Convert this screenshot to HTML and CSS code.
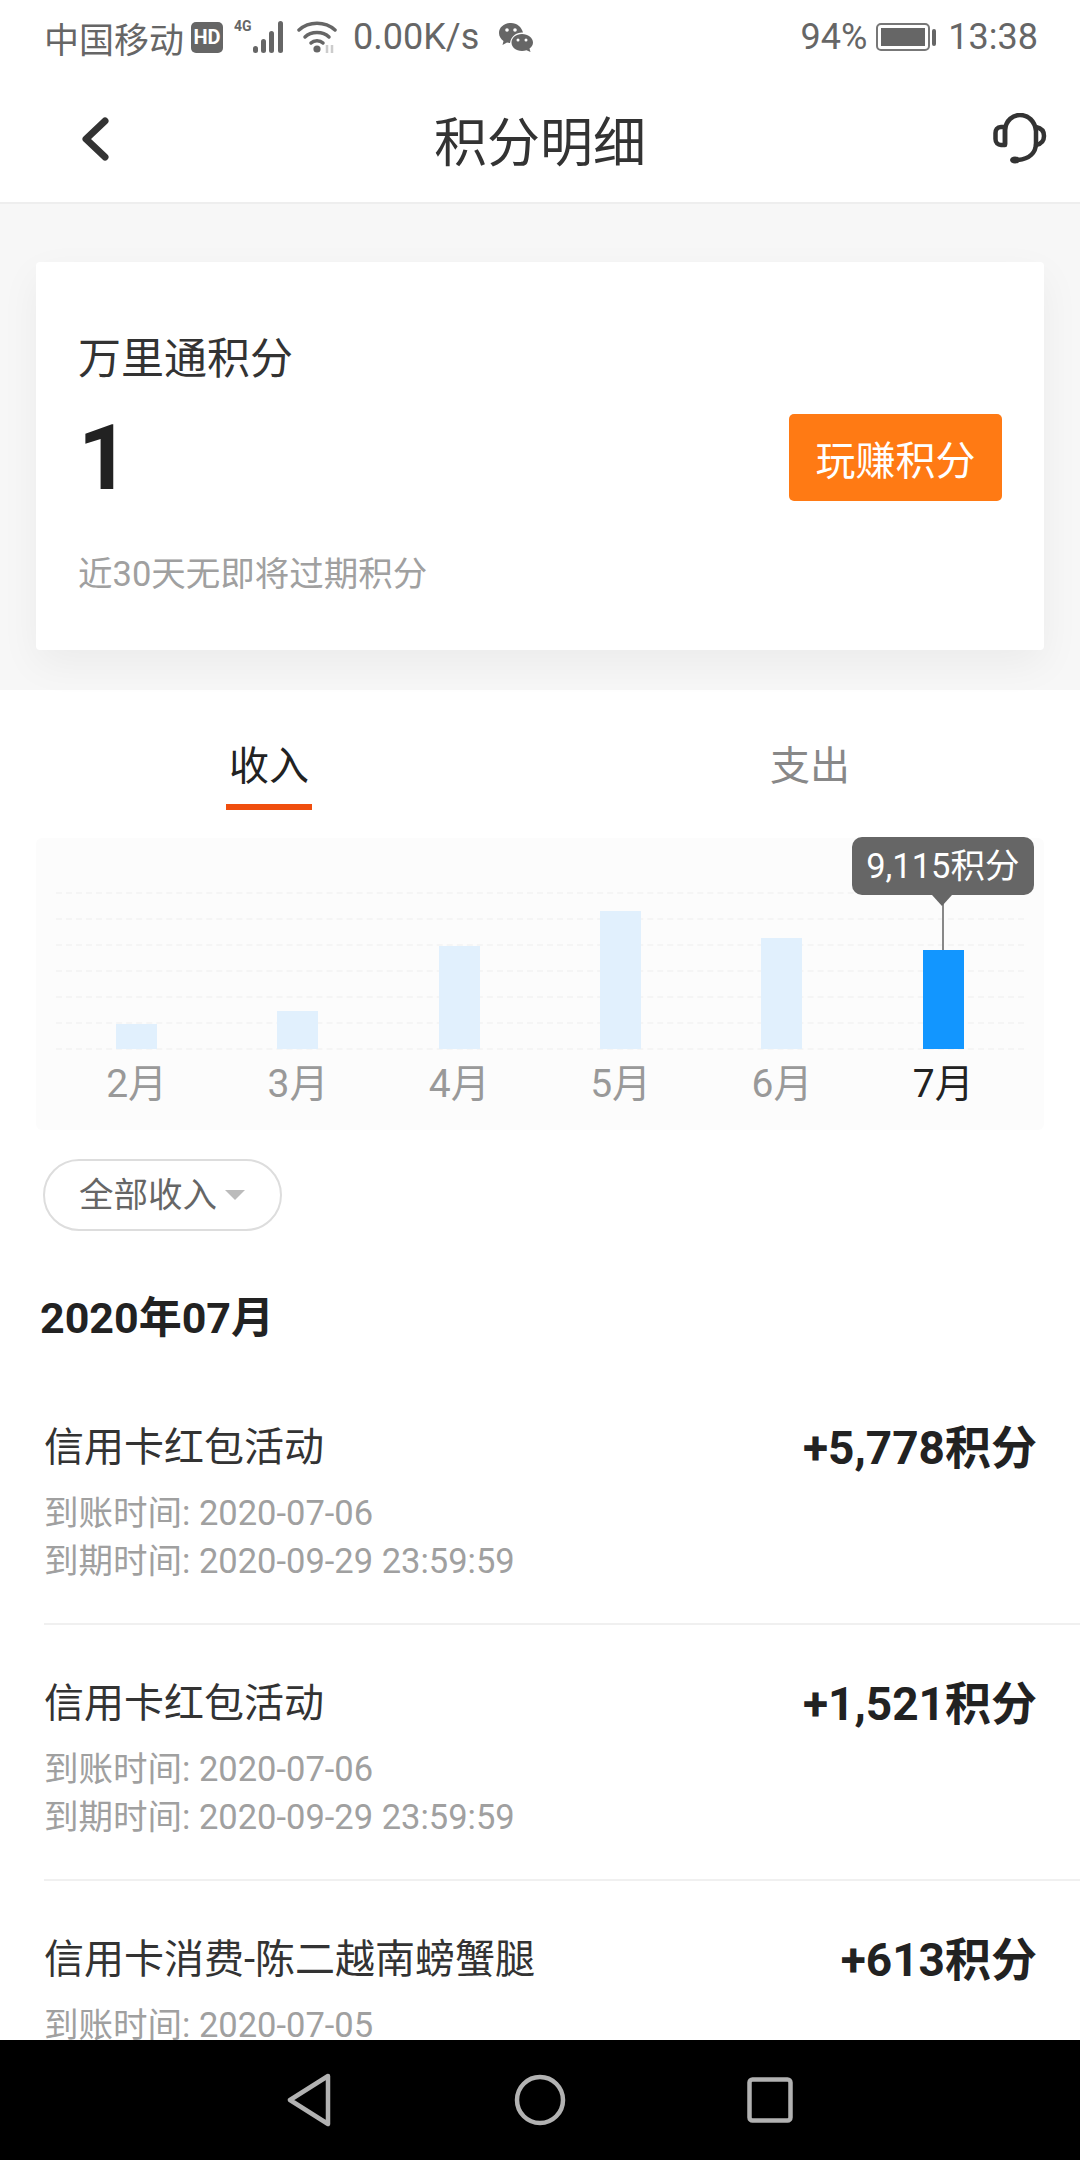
FILE: index.html
```html
<!DOCTYPE html>
<html lang="zh-CN">
<head>
    <meta charset="UTF-8">
    <meta content="width=device-width, initial-scale=1.0" name="viewport">
    <title>积分明细</title>
    <link rel="stylesheet" href="styles.css">
</head>
<body>
<div class="screen">
    <div class="status-bar">
        <span class="carrier">中国移动</span>
        <span class="hd-badge">HD</span>
        <svg class="signal" width="54" height="46" viewBox="0 -6 54 46">
            <text x="0" y="11" class="signal-label">4G</text>
            <g fill="#666">
                <rect x="19" y="26" width="5" height="7" rx="2.5"/>
                <rect x="27" y="19" width="5" height="14" rx="2.5"/>
                <rect x="35" y="11" width="5" height="22" rx="2.5"/>
                <rect x="44" y="1" width="5" height="32" rx="2.5"/>
            </g>
        </svg>
        <svg class="wifi" width="42" height="34" viewBox="0 0 42 34">
            <g fill="none" stroke="#666" stroke-width="3.5" stroke-linecap="round">
                <path d="M2 10 C12 1 28 1 38 10"/>
                <path d="M8 17 C14 11 26 11 32 17"/>
                <path d="M14 23 C17 20 23 20 26 23"/>
            </g>
            <circle cx="20" cy="29" r="3.6" fill="#666"/>
            <path d="M30 33 V25 M35 33 V25" stroke="#ccc" stroke-width="2.5"/>
        </svg>
        <span class="speed">0.00K/s</span>
        <svg class="wechat" width="36" height="30" viewBox="0 0 36 30">
            <path fill="#666" d="M13 1 C6 1 1 5.500 1 11 C1 14.500 3 17 5.500 19 L4.500 23 L9 20.500 C10 20.800 11 21 12 21 C13 14 19 10 25 10.500 C23.500 5 19 1 13 1Z"/>
            <path fill="#666" d="M24 12 C17.800 12 13.500 16 13.500 20.500 C13.500 25 17.800 29 24 29 C25.500 29 27 28.700 28.500 28.200 L32.500 30 L31.500 26.500 C33.800 25 35 22.800 35 20.500 C35 16 30 12 24 12Z"/>
            <circle cx="9" cy="8" r="1.800" fill="#fff"/>
            <circle cx="17" cy="8" r="1.800" fill="#fff"/>
            <circle cx="20" cy="18" r="1.500" fill="#fff"/>
            <circle cx="28" cy="18" r="1.500" fill="#fff"/>
        </svg>
        <span class="status-right">94%</span>
        <span class="battery"><span class="battery-level"></span></span>
        <span class="battery-nub"></span>
        <span class="clock">13:38</span>
    </div>

    <header class="top-nav">
        <svg class="back-icon" width="30" height="44" viewBox="0 0 30 44">
            <path d="M25 4 L6 22 L25 40" fill="none" stroke="#333" stroke-width="7" stroke-linecap="round" stroke-linejoin="round"/>
        </svg>
        <h1>积分明细</h1>
        <svg class="service-icon" width="54" height="52" viewBox="0 0 54 52">
            <g fill="none" stroke="#333" stroke-width="4.500" stroke-linecap="round" stroke-linejoin="round">
                <path d="M12 31 V17 C13 7 20 2 27 2 C35 2 42 8 43 18 V30 C43 40 36 46 25 47"/>
                <path d="M12 14 H8 C4 14 2.500 17 2.500 20 V26 C2.500 30 5 32 8 32 H12 Z"/>
                <path d="M43 14 C48 15 51 18 51 23 C51 28 48 31 43 32"/>
            </g>
            <ellipse cx="22" cy="47" rx="5" ry="3.500" fill="#333"/>
        </svg>
    </header>

    <main class="content">
        <section class="summary">
            <div class="summary-card">
                <div class="summary-info">
                    <div class="summary-label">万里通积分</div>
                    <div class="summary-value">1</div>
                    <div class="summary-note">近30天无即将过期积分</div>
                </div>
                <button class="earn-btn" type="button">玩赚积分</button>
            </div>
        </section>

        <section class="details">
            <div class="tabs">
                <div class="tab active"><span>收入</span></div>
                <div class="tab"><span>支出</span></div>
            </div>

            <div class="chart">
                <div class="plot">
                    <div class="grid-lines">
                        <i></i><i></i><i></i><i></i><i></i><i></i><i></i>
                    </div>
                    <div class="bars">
                        <div class="bar-col"><div class="bar" style="height: 25px"></div></div>
                        <div class="bar-col"><div class="bar" style="height: 38px"></div></div>
                        <div class="bar-col"><div class="bar" style="height: 103px"></div></div>
                        <div class="bar-col"><div class="bar" style="height: 138px"></div></div>
                        <div class="bar-col"><div class="bar" style="height: 111px"></div></div>
                        <div class="bar-col current">
                            <div class="bar" style="height: 99px">
                                <div class="tooltip">9,115积分</div>
                            </div>
                        </div>
                    </div>
                </div>
                <div class="months">
                    <span>2月</span><span>3月</span><span>4月</span><span>5月</span><span>6月</span><span class="current">7月</span>
                </div>
            </div>

            <div class="filter"><span>全部收入</span><i class="caret"></i></div>

            <h2 class="month-title">2020年07月</h2>

            <div class="record">
                <div class="record-head">
                    <span class="record-name">信用卡红包活动</span>
                    <span class="record-points">+5,778积分</span>
                </div>
                <div class="record-time">到账时间: 2020-07-06</div>
                <div class="record-time">到期时间: 2020-09-29 23:59:59</div>
            </div>
            <div class="record">
                <div class="record-head">
                    <span class="record-name">信用卡红包活动</span>
                    <span class="record-points">+1,521积分</span>
                </div>
                <div class="record-time">到账时间: 2020-07-06</div>
                <div class="record-time">到期时间: 2020-09-29 23:59:59</div>
            </div>
            <div class="record">
                <div class="record-head">
                    <span class="record-name">信用卡消费-陈二越南螃蟹腿</span>
                    <span class="record-points">+613积分</span>
                </div>
                <div class="record-time">到账时间: 2020-07-05</div>
            </div>
        </section>
    </main>

    <nav class="system-nav">
        <svg width="46" height="54" viewBox="0 0 46 54">
            <path d="M41 3 L3 27 L41 51 Z" fill="none" stroke="#b2b2b2" stroke-width="4.500" stroke-linejoin="round"/>
        </svg>
        <svg width="52" height="52" viewBox="0 0 52 52">
            <circle cx="26" cy="26" r="23" fill="none" stroke="#b2b2b2" stroke-width="4.500"/>
        </svg>
        <svg width="46" height="46" viewBox="0 0 46 46">
            <rect x="2.500" y="2.500" width="41" height="41" rx="3" fill="none" stroke="#b2b2b2" stroke-width="4.500"/>
        </svg>
    </nav>
</div>
</body>
</html>
```

FILE: styles.css
```css
* {
    box-sizing: border-box;
}

body {
    margin: 0;
    font-family: Roboto, "Noto Sans CJK SC", sans-serif;
    background-color: #fff;
    color: #222;
}

.screen {
    width: 1080px;
    height: 2160px;
    display: flex;
    flex-direction: column;
    overflow: hidden;
}

/* Status bar */
.status-bar {
    height: 76px;
    flex: none;
    display: flex;
    align-items: center;
    padding: 0 42px 2px 44px;
    color: #666;
    font-size: 35px;
}

.hd-badge {
    width: 32px;
    height: 31px;
    margin-left: 7px;
    background-color: #666;
    border-radius: 5px;
    color: #fff;
    font-size: 20px;
    font-weight: 700;
    line-height: 31px;
    text-align: center;
}

.signal {
    margin-left: 11px;
}

.signal-label {
    font-size: 14px;
    font-weight: 700;
    fill: #666;
}

.wifi {
    margin-left: 9px;
}

.speed {
    margin-left: 14px;
    font-size: 36px;
}

.wechat {
    margin-left: 19px;
}

.status-right {
    margin-left: auto;
    font-size: 36px;
}

.battery {
    width: 54px;
    height: 28px;
    margin-left: 9px;
    padding: 3px;
    border: 2px solid #777;
    border-radius: 5px;
}

.battery-level {
    display: block;
    height: 100%;
    background-color: #666;
}

.battery-nub {
    width: 4px;
    height: 17px;
    margin-left: 2px;
    background-color: #666;
    border-radius: 2px;
}

.clock {
    margin-left: 12px;
    font-size: 36px;
}

/* Title bar */
.top-nav {
    height: 128px;
    flex: none;
    display: grid;
    grid-template-columns: 1fr auto 1fr;
    align-items: center;
    padding: 0 33px 0 80px;
    border-bottom: 2px solid #eee;
}

.top-nav h1 {
    margin: 0 0 0 -47px;
    font-size: 53px;
    font-weight: 400;
    color: #333;
}

.service-icon {
    justify-self: end;
}

.content {
    flex: 1;
    min-height: 0;
    overflow: hidden;
}

/* Points summary */
.summary {
    height: 486px;
    padding: 58px 36px 0;
    background-color: #f7f7f7;
}

.summary-card {
    height: 388px;
    display: flex;
    align-items: flex-start;
    justify-content: space-between;
    padding: 67px 42px 0;
    background-color: #fff;
    border-radius: 4px;
    box-shadow: 0 14px 40px rgba(0, 0, 0, 0.05);
}

.summary-label {
    font-size: 43px;
    line-height: 60px;
    color: #333;
}

.summary-value {
    margin-top: 9px;
    font-size: 90px;
    font-weight: 700;
    line-height: 122px;
    color: #222;
}

.summary-note {
    margin-top: 31px;
    font-size: 34.5px;
    line-height: 46px;
    color: #a0a0a0;
}

.earn-btn {
    width: 213px;
    height: 87px;
    margin-top: 85px;
    padding: 0;
    border: none;
    border-radius: 5px;
    background-color: #ff7a14;
    color: #fff;
    font-family: inherit;
    font-size: 40px;
}

/* Tabs */
.tabs {
    height: 120px;
    display: flex;
}

.tab {
    width: 50%;
    display: flex;
    font-size: 40px;
    color: #888;
}

.tab span {
    width: 86px;
    height: 120px;
    padding-top: 47px;
    line-height: 60px;
    white-space: nowrap;
    text-align: center;
}

.tab.active {
    padding-left: 226px;
    color: #222;
}

.tab:not(.active) {
    padding-left: 227px;
}

.tab.active span {
    border-bottom: 6px solid #f04e0e;
}

/* Bar chart */
.chart {
    height: 292px;
    margin: 28px 36px 0;
    padding: 0 20px;
    background-color: #fcfcfc;
    border-radius: 6px;
}

.plot {
    position: relative;
    height: 212px;
}

.grid-lines {
    position: absolute;
    left: 0;
    right: 0;
    top: 54px;
    bottom: 0;
    display: flex;
    flex-direction: column;
    justify-content: space-between;
}

.grid-lines i {
    display: block;
    border-top: 2px dashed #f5f5f5;
}

.bars {
    position: relative;
    height: 100%;
    display: grid;
    grid-template-columns: repeat(6, 1fr);
    align-items: end;
}

.bar-col {
    display: flex;
    justify-content: center;
    padding-bottom: 1px;
}

.bar {
    position: relative;
    width: 41px;
    background-color: #e1f0fd;
}

.current .bar {
    background-color: #1296ff;
}

/* Line from the bubble down to the bar */
.current .bar::before {
    content: "";
    position: absolute;
    left: 50%;
    bottom: 100%;
    width: 2px;
    height: 55px;
    margin-left: -1px;
    background-color: #888;
}

.tooltip {
    position: absolute;
    right: -70px;
    bottom: calc(100% + 55px);
    width: 182px;
    height: 58px;
    background-color: #666;
    border-radius: 10px;
    color: #fff;
    font-size: 34.5px;
    line-height: 58px;
    text-align: center;
    white-space: nowrap;
}

.tooltip::after {
    content: "";
    position: absolute;
    left: 90px;
    top: 100%;
    margin-left: -10px;
    border-top: 11px solid #666;
    border-left: 10px solid transparent;
    border-right: 10px solid transparent;
}

.months {
    display: grid;
    grid-template-columns: repeat(6, 1fr);
    padding-top: 9px;
    font-size: 39px;
    line-height: 50px;
    color: #999;
    text-align: center;
}

.months .current {
    color: #222;
}

/* Filter pill */
.filter {
    width: 239px;
    height: 72px;
    margin: 29px 0 0 43px;
    padding: 0 0 6px 34px;
    display: flex;
    align-items: center;
    border: 2px solid #ddd;
    border-radius: 36px;
    font-size: 34.5px;
    color: #666;
}

.caret {
    margin: 5px 0 0 8px;
    border-top: 10px solid #bbb;
    border-left: 10px solid transparent;
    border-right: 10px solid transparent;
}

.month-title {
    margin: 59px 0 0 40px;
    font-size: 43px;
    font-weight: 700;
    line-height: 56px;
    color: #222;
}

/* Points records */
.record {
    height: 256px;
    margin-left: 44px;
    padding: 45px 43px 0 0;
    border-bottom: 2px solid #f0f0f0;
}

.month-title + .record {
    margin-top: 23px;
}

.record-head {
    display: flex;
    align-items: center;
    justify-content: space-between;
    height: 60px;
    margin-bottom: 15px;
}

.record-name {
    font-size: 40px;
    color: #333;
}

.record-points {
    font-size: 46px;
    font-weight: 700;
    color: #222;
}

.record-time {
    font-size: 34.5px;
    line-height: 48px;
    color: #a0a0a0;
}

/* Android nav buttons */
.system-nav {
    height: 120px;
    flex: none;
    display: grid;
    grid-template-columns: 46px 52px 46px;
    column-gap: 181px;
    justify-content: center;
    align-items: center;
    background-color: #000;
}
```
